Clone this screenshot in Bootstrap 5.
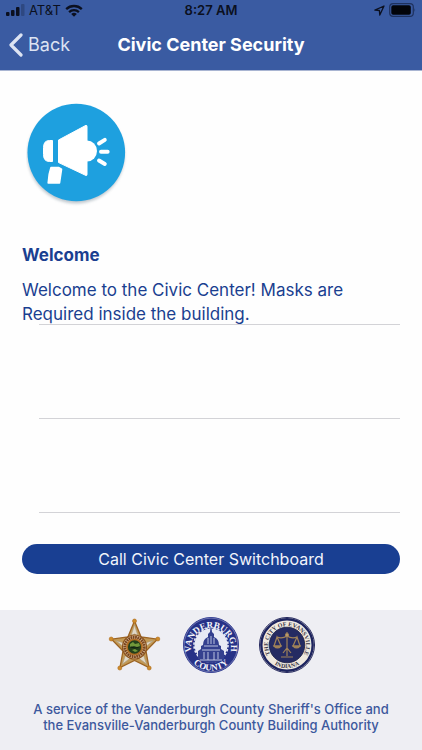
<!DOCTYPE html>
<html lang="en">
<head>
<meta charset="utf-8">
<meta name="viewport" content="width=device-width, initial-scale=1">
<title>Civic Center Security</title>
<link href="https://cdn.jsdelivr.net/npm/bootstrap@5.3.0/dist/css/bootstrap.min.css" rel="stylesheet">
<style>
  body { font-family: Inter, "Liberation Sans", sans-serif; background: #fefefe; color: #1a3f90; }
  svg { display: block; flex: none; }
  .app-header { background: #3a5ba2; border-bottom: 1px solid #a9b5d2; }
  .status-bar { height: 20px; font-size: 13px; line-height: 20px; color: #0b1020; padding: 0 6px; }
  .title-bar { height: 50px; padding: 0 8px; }
  .back-link { font-size: 18px; line-height: 24px; color: #dce3f2; }
  .page-title { font-size: 18px; line-height: 24px; }
  .content { padding: 32px 22px 36px; }
  .hero-icon { margin-left: 4px; }
  .section-title { font-size: 17px; line-height: 24px; margin: 36px 0 11px; }
  .message { font-size: 17px; line-height: 24px; }
  .rows li { height: 94px; border-top: 1px solid #d3d3d7; }
  .rows li:last-child { height: 32px; }
  .rows { margin: -2px 0 0 17px; }
  .call-btn { background: #193f92; color: #f1f4fb; font-size: 16px; line-height: 24px; padding: 3px 12px; border: 0; }
  .call-btn:hover { background: #14347a; color: #fff; }
  .app-footer { background: #eeeef3; }
  .seals { gap: 20px; padding-top: 7px; }
  .service-note { font-size: 13px; font-weight: 500; line-height: 16px; margin-top: 28px; padding: 0 16px 17px; color: #3c589d; }
</style>
<script src="https://cdn.jsdelivr.net/npm/bootstrap@5.3.0/dist/js/bootstrap.bundle.min.js"></script>
</head>
<body class="d-flex flex-column min-vh-100">
<header class="app-header">
  <div class="status-bar row g-0 align-items-center">
    <div class="col d-flex align-items-center gap-1">
      <svg width="19" height="12" viewBox="0 0 19 12" aria-hidden="true"><g fill="#0b1020"><rect y="8" width="3.5" height="4" rx="1"/><rect x="5" y="6" width="3.5" height="6" rx="1"/><rect x="10" y="3" width="3.5" height="9" rx="1"/><rect x="15" width="3.5" height="12" rx="1" opacity=".25"/></g></svg>
      <span>AT&amp;T</span>
      <svg width="18" height="13" viewBox="0 0 18 13" fill="none" stroke="#0b1020" stroke-width="2.3" aria-hidden="true"><path d="M1.2 5.1a11.3 11.3 0 0 1 15.6 0M4.1 8.1a7.1 7.1 0 0 1 9.8 0"/><path d="M6.2 10a4 4 0 0 1 5.6 0L9 12.8z" fill="#0b1020" stroke="none"/></svg>
    </div>
    <div class="col-auto fw-semibold">8:27 AM</div>
    <div class="col d-flex justify-content-end align-items-center gap-1">
      <svg width="11" height="11" viewBox="0 0 11 11" fill="none" stroke="#0b1020" stroke-width="1.3" stroke-linejoin="round" aria-hidden="true"><path d="M10 1 .9 5.2l4.5.3.4 4.6z"/></svg>
      <svg width="27" height="14" viewBox="0 0 27 14" aria-hidden="true"><rect x=".7" y=".7" width="23.6" height="12.6" rx="3.4" fill="none" stroke="#1e315e" stroke-width="1.2"/><rect x="2.3" y="2.3" width="19.5" height="9.4" rx="1.8" fill="#02040a"/><path d="M25.5 5q1.3 2 0 4z" fill="#1e315e"/></svg>
    </div>
  </div>
  <nav class="title-bar row g-0 align-items-center" aria-label="Page navigation">
    <div class="col d-flex">
      <a href="#" class="back-link d-flex align-items-center gap-1 text-decoration-none">
        <svg width="16" height="24" viewBox="0 0 16 24" fill="none" stroke="#dce3f2" stroke-width="3.2" stroke-linecap="round" stroke-linejoin="round" aria-hidden="true"><path d="M13 2 3 12l10 10"/></svg>Back</a>
    </div>
    <h1 class="page-title col-auto fw-bold text-white mb-0">Civic Center Security</h1>
    <div class="col"></div>
  </nav>
</header>

<main class="content flex-grow-1">
  <svg class="hero-icon" width="102" height="104" viewBox="0 0 102 104" role="img" aria-label="Announcement">
    <defs><filter id="soft" x="-10%" y="-10%" width="120%" height="120%"><feGaussianBlur stdDeviation="1.6"/></filter></defs>
    <circle cx="50" cy="52" r="48.5" fill="#8b9aa6" opacity=".55" filter="url(#soft)"/>
    <circle cx="50.3" cy="49.500" r="48.8" fill="#1ea0df"/>
    <g fill="#fff" stroke="#fff" stroke-linejoin="round">
      <path d="M26.500 37.500h-3q-6 0-6 7v7q0 7 6 7h3z" stroke-width="1"/>
      <path d="M32.500 37 60 22.300q1 0 1 1.200v48q0 1.200-1 1L32.500 59.500z" stroke-width="1"/>
      <path d="M61 37.500a10 10.500 0 0 1 0 21z" stroke="none"/>
      <path d="M25 64.500h7.500l3 1.800-2 13.700H22.200q.4-9 2.800-15.500z" stroke-width="1.600"/>
      <path d="m73 40.500 5.800-3.700M75 48.700h6.700M73 57.500l5.800 3.500" fill="none" stroke-width="3.900" stroke-linecap="round"/>
    </g>
  </svg>
  <h2 class="section-title fw-bold">Welcome</h2>
  <p class="message mb-0">Welcome to the Civic Center! Masks are<br>Required inside the building.</p>
  <ul class="rows list-unstyled"><li></li><li></li><li></li></ul>
  <button type="button" class="call-btn btn rounded-pill w-100">Call Civic Center Switchboard</button>
</main>

<footer class="app-footer text-center">
  <div class="seals d-flex justify-content-center">
    <svg width="56" height="56" viewBox="0 0 56 56" role="img" aria-label="Sheriff's star badge">
      <path d="M27.500 4 34 19.800 50.500 22.200 39 34 42 50.500 27.500 43.500 13 50.500 16 34 4.500 22.200 21 19.800z" fill="#c39a55" stroke="#9c6424" stroke-width="1.300"/>
      <path d="m27.500 8 3.500 11-3.500-2-3.500 2zM46 23.700l-9 7.500v-5zM39.500 47l-8-6 5-3zM15.500 47l8-6-5-3zM9 23.700l9 7.500v-5z" fill="#e0d8c7" stroke="#a99a7e" stroke-width=".6"/>
      <g fill="#ce8c2b" stroke="#ad691a" stroke-width=".6"><circle cx="27.500" cy="4" r="2"/><circle cx="50.800" cy="22" r="2"/><circle cx="42.200" cy="51" r="2"/><circle cx="12.800" cy="51" r="2"/><circle cx="4.200" cy="22" r="2"/></g>
      <circle cx="27.500" cy="30" r="12" fill="#e6cfa8" stroke="#8b521d" stroke-width="1.200"/>
      <circle cx="27.500" cy="30" r="9.700" fill="none" stroke="#7a451f" stroke-width="3" stroke-dasharray="1.800 .5"/>
      <circle cx="27.500" cy="30" r="7.500" fill="#24401b" stroke="#b06b22" stroke-width="1.700"/>
      <path d="m23 27 3-2 2 2 4-1 1 3-3 1-3-1-4 1zM25 33l3-1 3 2-3 1z" fill="#71983b"/>
      <path d="m23.500 30 4 1 4-.500" stroke="#111f13" stroke-width="1.200" fill="none"/>
    </svg>
    <svg width="56" height="56" viewBox="0 0 56 56" role="img" aria-label="Vanderburgh County seal">
      <defs><path id="countyTop" d="M12.500 43.500A20 20 0 1 1 43.500 43.500"/><path id="countyBottom" d="M2.500 28A25.500 25.500 0 0 0 53.500 28"/></defs>
      <circle cx="28" cy="28" r="27.500" fill="#263187" stroke="#2e3990"/>
      <circle cx="28" cy="28" r="26.800" fill="none" stroke="#a6aad0" stroke-width=".5"/>
      <circle cx="28" cy="28" r="16.500" fill="#e7e9f4"/>
      <circle cx="28" cy="28" r="17" fill="none" stroke="#e7e9f4" stroke-width="1.600" stroke-dasharray="2.400 1.700"/>
      <path d="M27.500 10h1l.5 5 2 2v3q5 2 5 8l2 1v3l3 2v8q-5 4-13 4t-13-4v-8l3-2v-3l2-1q0-6 5-8v-3l2-2z" fill="#34408f"/>
      <path d="M25 21v6M28 19v8M31 21v6M21 29h14M19 33h18M21 35v7M25 35v8M31 35v8M35 35v7M17 43h22" stroke="#cbd0e8" stroke-width=".9" fill="none"/>
      <g fill="#f3f4fa" font-family="Liberation Serif, serif" font-size="9" font-weight="700" text-anchor="middle"><text><textPath href="#countyTop" startOffset="50%">VANDERBURGH</textPath></text><text><textPath href="#countyBottom" startOffset="50%">COUNTY</textPath></text></g>
    </svg>
    <svg width="56" height="56" viewBox="0 0 56 56" role="img" aria-label="City of Evansville seal">
      <defs><path id="cityTop" d="M14.500 41.500A19 19 0 1 1 41.500 41.500"/><path id="cityBottom" d="M4.800 28A23.200 23.200 0 0 0 51.200 28"/></defs>
      <circle cx="28" cy="28" r="27.500" fill="#efe9df" stroke="#21255c"/>
      <circle cx="28" cy="28" r="25.700" fill="none" stroke="#1d245f" stroke-width="2.400"/>
      <circle cx="28" cy="28" r="17.800" fill="#252b62" stroke="#171c43" stroke-width=".8"/>
      <g fill="#373445" font-family="Liberation Serif, serif" font-size="6" font-weight="700" text-anchor="middle"><text><textPath href="#cityTop" startOffset="50%">THE CITY OF EVANSVILLE</textPath></text><text><textPath href="#cityBottom" startOffset="50%">INDIANA</textPath></text></g>
      <g fill="none" stroke="#a08258" stroke-width="1.200"><path d="M28 15v24M18 20q5 2 10-1 5 3 10 1M18 20l-3 9h7zM38 20l-4 9h7zM22 40h12M24 36l4-5 4 5"/><path d="M15 29q3.500 4 7 0zM34 29q3.500 4 7 0z" fill="#a08258"/><circle cx="28" cy="18" r="1.500" fill="#c0a477"/></g>
    </svg>
  </div>
  <p class="service-note mb-0">A service of the Vanderburgh County Sheriff's Office and<br>the Evansville-Vanderburgh County Building Authority</p>
</footer>
</body>
</html>
